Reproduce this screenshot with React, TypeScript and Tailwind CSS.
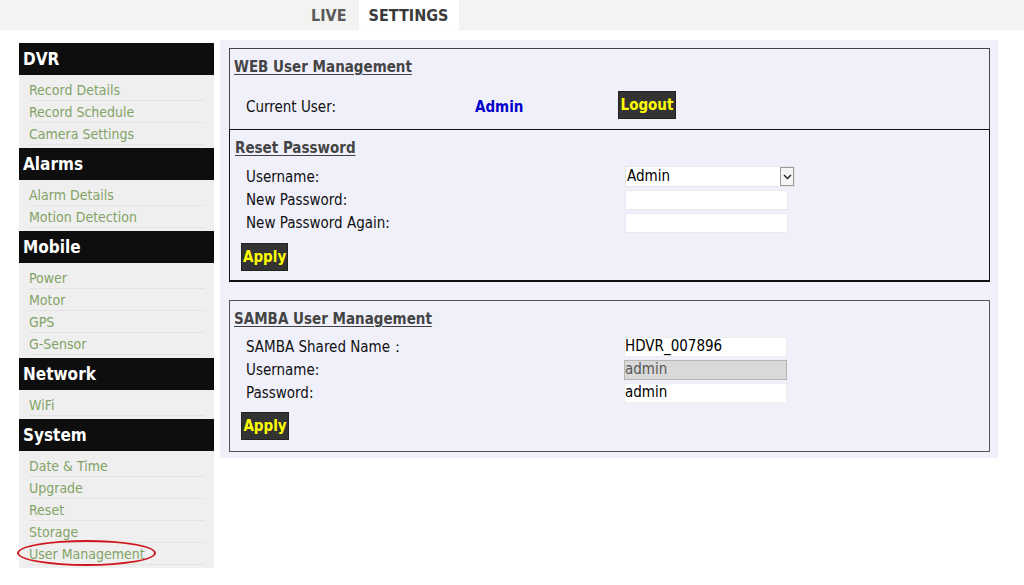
import React from 'react';

const font = { fontFamily: "'DejaVu Sans Condensed', 'Liberation Sans', sans-serif" };

const menu = [
  { title: 'DVR', items: ['Record Details', 'Record Schedule', 'Camera Settings'] },
  { title: 'Alarms', items: ['Alarm Details', 'Motion Detection'] },
  { title: 'Mobile', items: ['Power', 'Motor', 'GPS', 'G-Sensor'] },
  { title: 'Network', items: ['WiFi'] },
  { title: 'System', items: ['Date & Time', 'Upgrade', 'Reset', 'Storage', 'User Management'] },
];

function DarkButton({ children, className = '' }: { children: React.ReactNode; className?: string }) {
  return (
    <button className={`bg-[#333333] border border-[#222] text-[#ffff00] font-bold text-[15px] leading-none px-[1px] ${className}`}>
      {children}
    </button>
  );
}

function Row({ label, children }: { label: string; children: React.ReactNode }) {
  return (
    <div className="flex items-center h-[23px]">
      <div className="w-[379px] text-[15px] text-[#111] pt-[1px]">{label}</div>
      {children}
    </div>
  );
}

export default function App() {
  return (
    <div className="w-[1024px] h-[585px] bg-white overflow-hidden" style={font}>
      {/* top tabs */}
      <div className="h-[31px] bg-[#f3f3f1] flex items-end pl-[299px] border-b border-[#fafafa]">
        <div className="h-[31px] px-[12px] pt-[3px] flex items-center text-[16px] font-bold text-[#5a5a5a]">LIVE</div>
        <div className="h-[31px] w-[100px] pt-[3px] bg-white flex items-center justify-center text-[16px] font-bold text-[#3a3a3a]">SETTINGS</div>
      </div>

      <div className="flex">
        {/* sidebar */}
        <div className="ml-[19px] mt-[12px] w-[195px] relative">
          {menu.map((sec) => (
            <div key={sec.title}>
              <div className="h-[32px] bg-[#0e0e0e] text-white font-bold text-[17px] flex items-center pl-[4px] pt-[2px]">{sec.title}</div>
              <div className="bg-[#efefef] pt-[4px] pb-[3px]">
                {sec.items.map((it) => (
                  <div key={it} className="h-[22px] ml-[10px] mr-[9px] flex items-center pt-[2px] text-[14px] text-[#83a366] border-b border-[#e3e3e3]">
                    {it}
                  </div>
                ))}
              </div>
            </div>
          ))}
          <div className="absolute left-[-2px] top-[497px] w-[139px] h-[26px] rounded-[50%] border-[2.5px] border-[#cf1720]" />
        </div>

        {/* main panel */}
        <div className="ml-[6px] mt-[9px] w-[778px] h-[418px] bg-[#f0f0fa] pl-[9px] pt-[8px]">
          <div className="w-[761px]">
            <div className="border-x border-t border-[#444] h-[81px] pt-[7px]">
              <div className="pl-[4px] text-[15px] font-bold text-[#444] underline underline-offset-2 h-[20px]">WEB User Management</div>
              <div className="flex items-center mt-[15px] h-[28px] pl-[16px]">
                <div className="w-[229px] h-[28px] flex items-center pt-[5px] text-[15px] text-[#111]">Current User:</div>
                <div className="w-[143px] h-[28px] flex items-center pt-[4px] text-[15px] font-bold text-[#0000cc]">Admin</div>
                <DarkButton className="h-[28px] w-[58px]">Logout</DarkButton>
              </div>
            </div>
            <div className="border border-[#111] border-b-2 pt-[7px] pb-[10px] h-[153px]">
              <div className="pl-[5px] text-[15px] font-bold text-[#444] underline underline-offset-2 h-[20px]">Reset Password</div>
              <div className="pl-[16px] mt-[8px]">
                <Row label="Username:">
                  <div className="h-[21px] w-[170px] bg-white border border-[#e6e6e6] flex items-center justify-between text-[15px] text-black pl-[1px]">
                    <span>Admin</span>
                    <span className="h-[19px] w-[14px] border border-[#999] bg-[#f4f4f4] flex items-center justify-center">
                      <svg width="9" height="6" viewBox="0 0 9 6"><path d="M1 1 L4.5 4.5 L8 1" stroke="#222" strokeWidth="1.4" fill="none" /></svg>
                    </span>
                  </div>
                </Row>
                <Row label="New Password:">
                  <div className="h-[20px] w-[163px] bg-white border border-[#e8e8f0]" />
                </Row>
                <Row label="New Password Again:">
                  <div className="h-[20px] w-[163px] bg-white border border-[#e8e8f0]" />
                </Row>
              </div>
              <DarkButton className="ml-[11px] mt-[9px] h-[28px] w-[47px]">Apply</DarkButton>
            </div>

            <div className="mt-[18px] border border-[#555] h-[152px] pt-[7px] pl-[4px]">
              <div className="text-[15px] font-bold text-[#444] underline underline-offset-2 h-[20px]">SAMBA User Management</div>
              <div className="pl-[12px] mt-[7px]">
                <Row label="SAMBA Shared Name：">
                  <div className="h-[20px] w-[163px] -ml-px bg-white border border-[#eee] text-[15px] text-black flex items-center">HDVR_007896</div>
                </Row>
                <Row label="Username:">
                  <div className="h-[20px] w-[163px] -ml-px bg-[#d9d9d9] border border-[#b5b5b5] text-[15px] text-[#555] flex items-center">admin</div>
                </Row>
                <Row label="Password:">
                  <div className="h-[20px] w-[163px] -ml-px bg-white border border-[#eee] text-[15px] text-black flex items-center">admin</div>
                </Row>
              </div>
              <DarkButton className="ml-[7px] mt-[8px] h-[28px] w-[48px]">Apply</DarkButton>
            </div>
          </div>
        </div>
      </div>
    </div>
  );
}
